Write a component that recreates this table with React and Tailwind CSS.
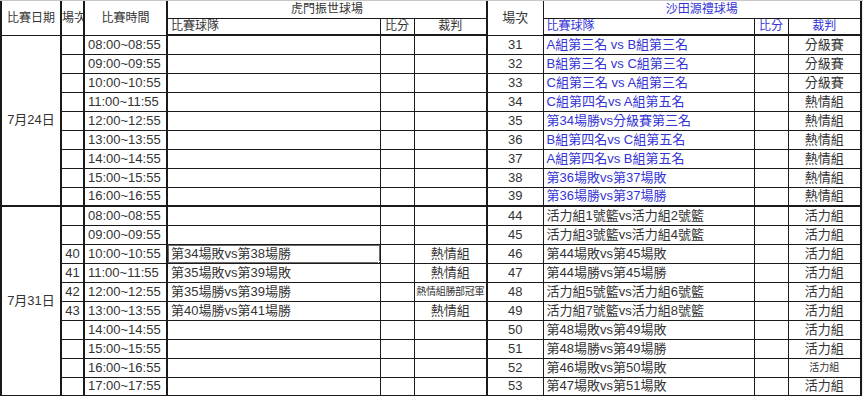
const times24 = ['08:00~08:55', '09:00~09:55', '10:00~10:55', '11:00~11:55', '12:00~12:55', '13:00~13:55', '14:00~14:55', '15:00~15:55', '16:00~16:55']
const times31 = [...times24, '17:00~17:55']

const right = [
  ['31', 'A組第三名 vs B組第三名', '分級賽', true],
  ['32', 'B組第三名 vs C組第三名', '分級賽', true],
  ['33', 'C組第三名 vs A組第三名', '分級賽', true],
  ['34', 'C組第四名vs A組第五名', '熱情組', true],
  ['35', '第34場勝vs分級賽第三名', '熱情組', true],
  ['36', 'B組第四名vs C組第五名', '熱情組', true],
  ['37', 'A組第四名vs B組第五名', '熱情組', true],
  ['38', '第36場敗vs第37場敗', '熱情組', true],
  ['39', '第36場勝vs第37場勝', '熱情組', true],
  ['44', '活力組1號籃vs活力組2號籃', '活力組'],
  ['45', '活力組3號籃vs活力組4號籃', '活力組'],
  ['46', '第44場敗vs第45場敗', '活力組'],
  ['47', '第44場勝vs第45場勝', '活力組'],
  ['48', '活力組5號籃vs活力組6號籃', '活力組'],
  ['49', '活力組7號籃vs活力組8號籃', '活力組'],
  ['50', '第48場敗vs第49場敗', '活力組'],
  ['51', '第48場勝vs第49場勝', '活力組'],
  ['52', '第46場敗vs第50場敗', '活力組', false, true],
  ['53', '第47場敗vs第51場敗', '活力組'],
]

// left field, 7/31 block (index within block)
const left31 = {
  2: ['40', '第34場敗vs第38場勝', '熱情組'],
  3: ['41', '第35場敗vs第39場敗', '熱情組'],
  4: ['42', '第35場勝vs第39場勝', '熱情組勝部冠軍', true],
  5: ['43', '第40場勝vs第41場勝', '熱情組'],
}

const rows = [
  ...times24.map((t) => ({ time: t })),
  ...times31.map((t, i) => {
    const l = left31[i]
    return l ? { time: t, no: l[0], team: l[1], judge: l[2], judgeSmall: l[3], sel: i === 2 } : { time: t }
  }),
].map((r, i) => ({ ...r, right: right[i] }))

const td = 'border border-[#1a1a1a] p-0 overflow-hidden whitespace-nowrap leading-[14px]'
const th = `${td} text-[12px] font-normal`
const blue = 'text-[#3434d4]'

export default function App() {
  return (
    <div className="h-[396px] w-[863px] overflow-hidden border-t border-[#c8c8c8] bg-[#ececec] font-['Liberation_Sans','Noto_Sans_CJK_TC',sans-serif] text-[13px] text-[#333]">
      <table className="w-[860px] table-fixed border-collapse bg-white">
        <colgroup>
          <col className="w-[60px]" />
          <col className="w-[23px]" />
          <col className="w-[83px]" />
          <col className="w-[213px]" />
          <col className="w-[34px]" />
          <col className="w-[73px]" />
          <col className="w-[56px]" />
          <col className="w-[211px]" />
          <col className="w-[34px]" />
          <col className="w-[73px]" />
        </colgroup>
        <thead>
          <tr className="h-[17px]">
            <th rowSpan={2} className={`${th} border-t-0 border-l-2 border-r-2 text-center`}>比賽日期</th>
            <th rowSpan={2} className={`${th} border-t-0 border-r-2 text-left`}>場次</th>
            <th rowSpan={2} className={`${th} border-t-0 border-r-2 text-center`}>比賽時間</th>
            <th colSpan={3} className={`${th} border-t-0 text-center`}>虎門振世球場</th>
            <th rowSpan={2} className={`${th} border-t-0 border-l-2 text-[13px] text-center`}>場次</th>
            <th colSpan={3} className={`${th} border-t-0 border-r-2 text-center ${blue}`}>沙田源禮球場</th>
          </tr>
          <tr className="h-[17px]">
            <th className={`${th} border-b-2 px-[3px] text-left`}>比賽球隊</th>
            <th className={`${th} border-b-2 text-center`}>比分</th>
            <th className={`${th} border-b-2 text-center`}>裁判</th>
            <th className={`${th} border-b-2 px-[3px] text-left ${blue}`}>比賽球隊</th>
            <th className={`${th} border-b-2 text-center ${blue}`}>比分</th>
            <th className={`${th} border-b-2 border-r-2 text-center ${blue}`}>裁判</th>
          </tr>
        </thead>
        <tbody>
          {rows.map((r, i) => {
            const [rno, rteam, rjudge, isBlue, small] = r.right
            const top = i === 9 ? 'border-t-2' : ''
            const bottom = i === rows.length - 1 ? 'border-b-2' : ''
            return (
              <tr key={i} className="h-[19px]">
                {i === 0 && (
                  <td rowSpan={9} className={`${td} border-l-2 border-r-2 border-b-2 text-center`}>7月24日</td>
                )}
                {i === 9 && (
                  <td rowSpan={10} className={`${td} border-l-2 border-r-2 border-t-2 border-b-2 text-center`}>7月31日</td>
                )}
                <td className={`${td} ${top} ${bottom} border-r-2 text-center`}>{r.no}</td>
                <td className={`${td} ${top} ${bottom} border-r-2 px-[3px]`}>{r.time}</td>
                <td className={`${td} ${top} ${bottom} relative px-[3px]`}>
                  {r.team}
                  {r.sel && (
                    <>
                      <span className="absolute inset-[-1px] border-2 border-[#6b6b6b]" />
                      <span className="absolute bottom-[-3px] right-[-3px] h-[5px] w-[5px] border border-white bg-[#333]" />
                    </>
                  )}
                </td>
                <td className={`${td} ${top} ${bottom}`} />
                <td className={`${td} ${top} ${bottom} text-center ${r.judgeSmall ? 'text-[10px] tracking-[-0.3px]' : ''}`}>{r.judge}</td>
                <td className={`${td} ${top} ${bottom} border-l-2 text-center`}>{rno}</td>
                <td className={`${td} ${top} ${bottom} px-[3px] ${isBlue ? blue : ''}`}>{rteam}</td>
                <td className={`${td} ${top} ${bottom}`} />
                <td className={`${td} ${top} ${bottom} border-r-2 text-center ${small ? 'text-[10px]' : ''}`}>{rjudge}</td>
              </tr>
            )
          })}
        </tbody>
      </table>
    </div>
  )
}
